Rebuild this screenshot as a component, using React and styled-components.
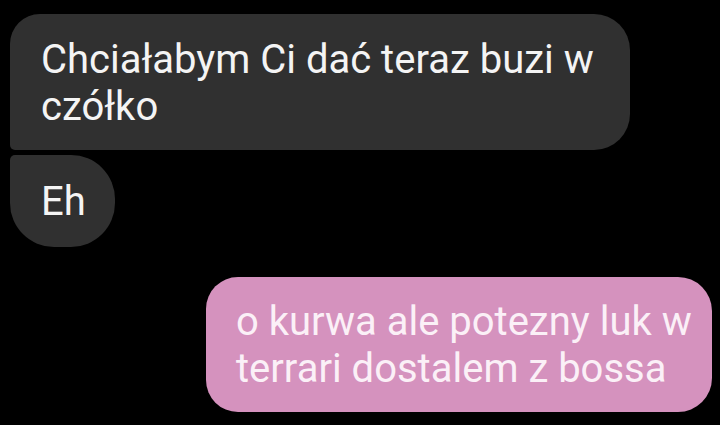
import React from "react";
import styled, { createGlobalStyle } from "styled-components";

const Global = createGlobalStyle`
  html, body {
    margin: 0;
    padding: 0;
    background: #000;
  }
  body {
    font-family: Roboto, "Noto Sans", "Liberation Sans", sans-serif;
  }
`;

const Thread = styled.div`
  width: 720px;
  height: 425px;
  box-sizing: border-box;
  padding: 14px 8px 0 10px;
  display: flex;
  flex-direction: column;
  background: #000;
  overflow: hidden;
`;

const Group = styled.div`
  display: flex;
  flex-direction: column;
  align-items: ${(p) => (p.$mine ? "flex-end" : "flex-start")};
  gap: 5px;
  margin-top: ${(p) => p.$offset || 0}px;
`;

const Bubble = styled.div`
  box-sizing: border-box;
  max-width: ${(p) => p.$max || 620}px;
  padding: ${(p) => p.$pad};
  border-radius: ${(p) => p.$radius};
  background: ${(p) => (p.$mine ? "#d592be" : "#303030")};
  color: ${(p) => (p.$mine ? "#fbf0f7" : "#f4f4f4")};
  font-size: 40px;
  line-height: 47px;
  letter-spacing: 0;
  word-wrap: break-word;
`;

export default function App() {
  return (
    <>
      <Global />
      <Thread>
        <Group>
          <Bubble $max={620} $pad="22px 36px 20px 31px" $radius="30px 36px 36px 5px">
            Chciałabym Ci dać teraz buzi w czółko
          </Bubble>
          <Bubble $pad="23px 29px 22px 31px" $radius="5px 44px 44px 44px">
            Eh
          </Bubble>
        </Group>
        <Group $mine $offset={30}>
          <Bubble $mine $max={506} $pad="21px 14px 20px 30px" $radius="32px 34px 34px 32px">
            o kurwa ale potezny luk w terrari dostalem z bossa
          </Bubble>
        </Group>
      </Thread>
    </>
  );
}
